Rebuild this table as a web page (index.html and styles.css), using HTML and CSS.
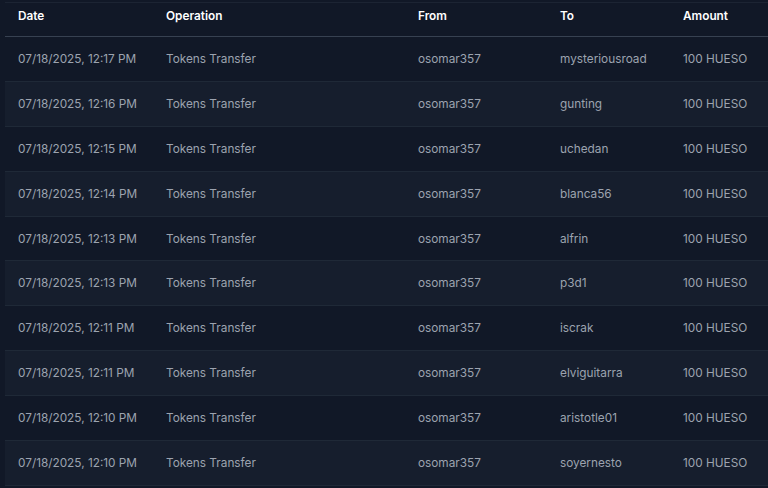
FILE: index.html
```html
<!DOCTYPE html>
<html>
<head>
<meta charset="utf-8">
<link rel="stylesheet" href="styles.css">
</head>
<body>
<div class="wrap">
<table class="tx">
<colgroup><col class="c1"><col class="c2"><col class="c3"><col class="c4"><col class="c5"></colgroup>
<thead>
<tr><th>Date</th><th>Operation</th><th>From</th><th>To</th><th>Amount</th></tr>
</thead>
<tbody>
<tr><td>07/18/2025, 12:17 PM</td><td>Tokens Transfer</td><td>osomar357</td><td>mysteriousroad</td><td>100 HUESO</td></tr>
<tr><td>07/18/2025, 12:16 PM</td><td>Tokens Transfer</td><td>osomar357</td><td>gunting</td><td>100 HUESO</td></tr>
<tr><td>07/18/2025, 12:15 PM</td><td>Tokens Transfer</td><td>osomar357</td><td>uchedan</td><td>100 HUESO</td></tr>
<tr><td>07/18/2025, 12:14 PM</td><td>Tokens Transfer</td><td>osomar357</td><td>blanca56</td><td>100 HUESO</td></tr>
<tr><td>07/18/2025, 12:13 PM</td><td>Tokens Transfer</td><td>osomar357</td><td>alfrin</td><td>100 HUESO</td></tr>
<tr><td>07/18/2025, 12:13 PM</td><td>Tokens Transfer</td><td>osomar357</td><td>p3d1</td><td>100 HUESO</td></tr>
<tr><td>07/18/2025, 12:11 PM</td><td>Tokens Transfer</td><td>osomar357</td><td>iscrak</td><td>100 HUESO</td></tr>
<tr><td>07/18/2025, 12:11 PM</td><td>Tokens Transfer</td><td>osomar357</td><td>elviguitarra</td><td>100 HUESO</td></tr>
<tr><td>07/18/2025, 12:10 PM</td><td>Tokens Transfer</td><td>osomar357</td><td>aristotle01</td><td>100 HUESO</td></tr>
<tr><td>07/18/2025, 12:10 PM</td><td>Tokens Transfer</td><td>osomar357</td><td>soyernesto</td><td>100 HUESO</td></tr>
</tbody>
</table>
</div>
</body>
</html>
```
FILE: styles.css
```css
html, body {
  margin: 0;
  padding: 0;
  background: #111827;
  font-family: Inter, "Noto Sans", sans-serif;
  overflow: hidden;
}
.wrap {
  padding: 2px 0 0 5px;
}
.tx {
  border-collapse: collapse;
  width: 775px;
  table-layout: fixed;
  font-size: 11.8px;
}
.c1 { width: 148px; }
.c2 { width: 252px; }
.c3 { width: 142px; }
.c4 { width: 123px; }
.c5 { width: 110px; }
.tx thead tr {
  border-top: 1px solid #1c2433;
}
.tx th {
  text-align: left;
  color: #ffffff;
  font-weight: 600;
  height: 34px;
  padding: 0 0 8px 13px;
  border-bottom: 1px solid #374151;
  box-sizing: border-box;
}
.tx td {
  color: #9ca3af;
  height: 44.9px;
  padding: 0 0 0 13px;
  border-bottom: 1px solid #1f2937;
  box-sizing: border-box;
  white-space: nowrap;
}
.tx tbody tr:nth-child(even) {
  background: #161e2d;
}
```
